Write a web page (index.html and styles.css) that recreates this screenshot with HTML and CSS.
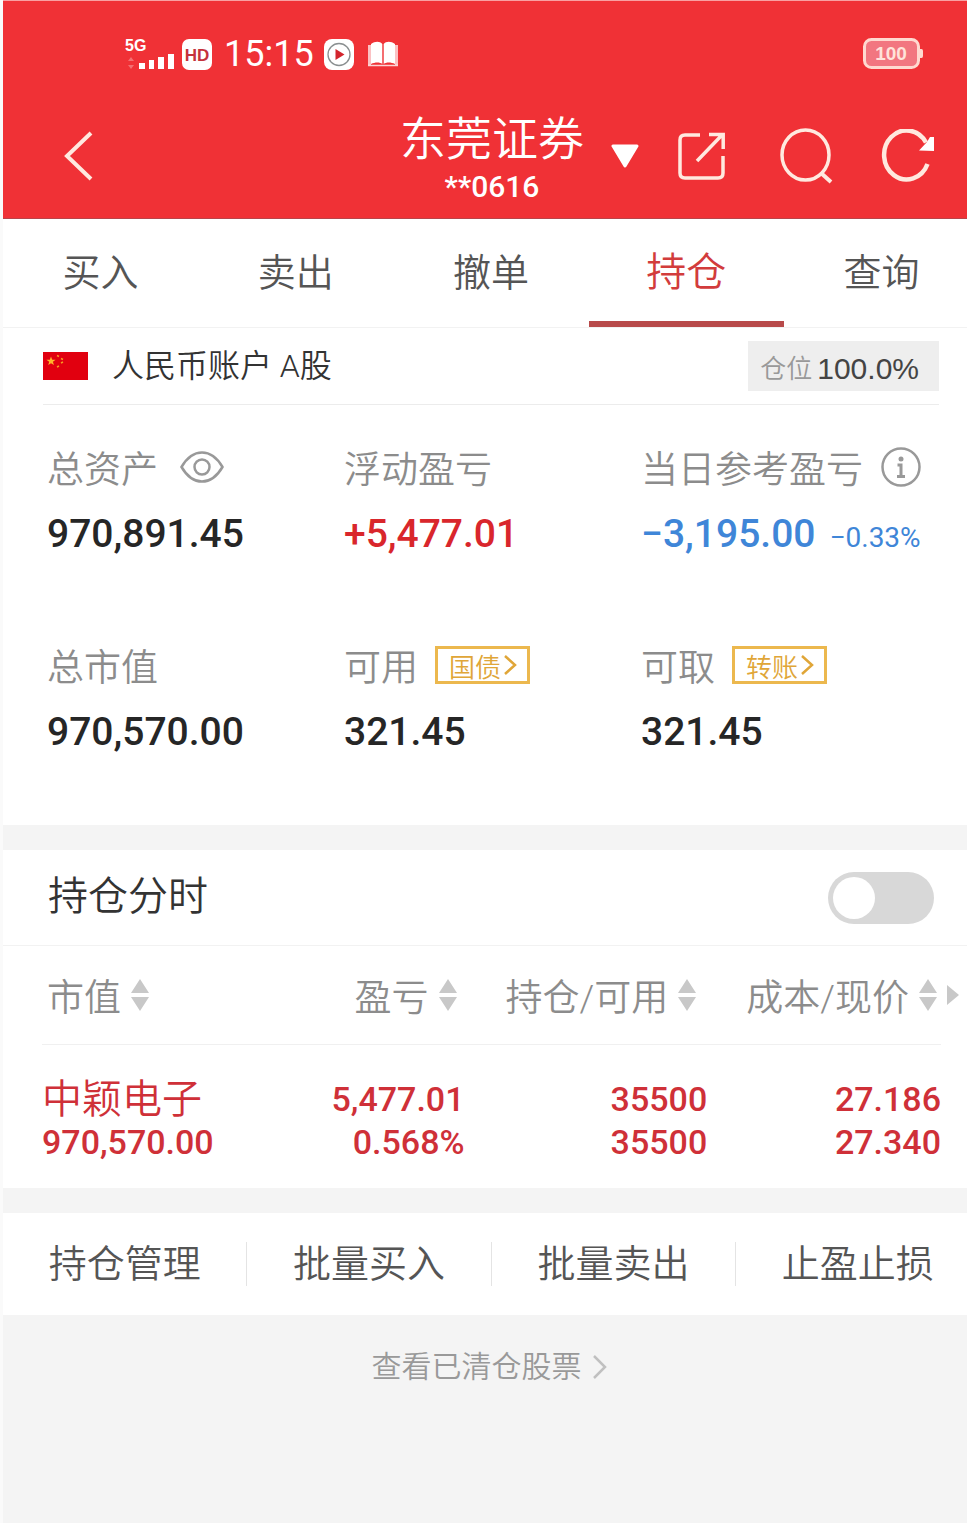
FILE: index.html
```html
<!DOCTYPE html>
<html lang="zh-CN">
<head>
<meta charset="utf-8">
<meta name="viewport" content="width=device-width, initial-scale=1">
<title>东莞证券 持仓</title>
<link rel="stylesheet" href="styles.css">
</head>
<body>
<div class="app">
  <header class="top">
    <div class="status">
      <svg class="status-signal" width="50" height="32" viewBox="0 0 50 32" role="img" aria-label="5G">
        <text x="0" y="13" class="signal-text">5G</text>
        <path d="M3 23l3-4 3 4zM3 27l3 4 3-4z" fill="#fff" opacity=".3"/>
        <path d="M14 25h6v6h-6zM24 22h5v9h-5zM33 19h6v12h-6zM43 16h6v15h-6z" fill="#fff"/>
      </svg>
      <svg class="status-hd" width="30" height="31" viewBox="0 0 30 31" role="img" aria-label="HD">
        <rect width="30" height="31" rx="7" fill="#fff"/>
        <text x="15" y="22" text-anchor="middle" class="hd-text">HD</text>
      </svg>
      <span class="status-time">15:15</span>
      <svg class="status-play" width="30" height="31" viewBox="0 0 30 31" aria-hidden="true">
        <rect width="30" height="31" rx="8" fill="#fff"/>
        <circle cx="15" cy="15.500" r="11" fill="none" stroke="#8a8f90" stroke-width="1.300"/>
        <path d="M11.500 10l9 5.500-9 5.500z" fill="#d3252d"/>
      </svg>
      <svg width="32" height="26" viewBox="0 0 32 26" aria-hidden="true">
        <path d="M1 4h3v20H1zM28 4h3v20h-3z" fill="#fff" opacity=".7"/>
        <path d="M4 3C8 0 13 0 15.300 3v20C13 21 8 21 4 23zM28 3c-4-3-9-3-11.300 0v20c2.300-2 7.300-2 11.300 0z" fill="#fff"/>
        <path d="M1 24.500h30" stroke="#fff" stroke-width="1.500" opacity=".8"/>
      </svg>
      <svg class="status-battery" width="60" height="32" viewBox="0 0 60 32" role="img" aria-label="100">
        <rect x="1.500" y="1.500" width="54" height="28" rx="7" fill="#f27680" stroke="#ffd9d0" stroke-width="3"/>
        <path d="M57 11h1.500q1.500 0 1.500 2v5q0 2-1.500 2H57z" fill="#ffd9d0"/>
        <text x="28" y="22" text-anchor="middle" class="battery-text">100</text>
      </svg>
    </div>
    <div class="nav">
      <button class="icon-btn" type="button" aria-label="返回">
        <svg width="30" height="50" viewBox="0 0 30 50"><path d="M28 2L4 25l24 23" fill="none" stroke="#ffe9df" stroke-width="4"/></svg>
      </button>
      <button class="broker" type="button">
        <span class="broker-name"><span class="broker-title">东莞证券</span><span class="broker-id">**0616</span></span>
        <svg width="28" height="24" viewBox="0 0 28 24" aria-hidden="true"><path d="M2 2h24L14 22z" fill="#fff" stroke="#fff" stroke-width="3" stroke-linejoin="round"/></svg>
      </button>
      <div class="nav-tools">
        <button class="icon-btn" type="button" aria-label="分享">
          <svg width="48" height="48" viewBox="0 0 48 48" fill="none" stroke="#ffe9df" stroke-width="3.500"><path d="M22 3H7Q2 3 2 8v33q0 5 5 5h33q5 0 5-5V24M19 29L44 3M31 2.500h14.200V17"/></svg>
        </button>
        <button class="icon-btn" type="button" aria-label="搜索">
          <svg width="61" height="56" viewBox="-7 0 61 56" fill="none" stroke="#ffe9df" stroke-width="3.500"><ellipse cx="25.500" cy="27" rx="23.500" ry="25"/><path d="M41 45l10 9" stroke-width="4"/></svg>
        </button>
        <button class="icon-btn" type="button" aria-label="刷新">
          <svg width="54" height="54" viewBox="0 0 54 54" fill="none" stroke="#ffe9df" stroke-width="4.500"><path d="M46.500 35A22.500 24.500 0 1 1 45 13.500"/><path d="M38 21.500L46 13l3-5h4v14z" fill="#fff" stroke="none"/></svg>
        </button>
      </div>
    </div>
  </header>

  <nav class="tabs">
    <a class="tab" href="#buy">买入</a>
    <a class="tab" href="#sell">卖出</a>
    <a class="tab" href="#cancel">撤单</a>
    <a class="tab tab-active" href="#positions" aria-current="page">持仓</a>
    <a class="tab" href="#query">查询</a>
  </nav>

  <main>
    <section class="panel">
      <div class="account">
        <svg width="45" height="28" viewBox="0 0 45 28" aria-hidden="true">
          <rect width="45" height="28" fill="#e1000f"/>
          <path d="M8 4.500l1.200 3.200h3.400L9.900 9.800l1 3.300L8 11.200l-2.800 1.900 1-3.300-2.800-2.100h3.400z" fill="#ffb52b"/>
          <path d="M14 3.500l2 1M18 6.500l2 1M18 11l2-1M14 15l2-1" stroke="#f79a20" stroke-width="1.500"/>
        </svg>
        <span class="account-name">人民币账户 A股</span>
        <span class="ratio"><span class="ratio-label">仓位</span><span>100.0%</span></span>
      </div>
      <dl class="metrics">
        <div class="metric">
          <dt>总资产
            <button class="icon-btn metric-eye" type="button" aria-label="隐藏金额">
              <svg width="44" height="32" viewBox="0 0 44 32" fill="none" stroke="#999" stroke-width="2.500"><path d="M1.500 16Q10 1.500 22 1.500T42.500 16Q34 30.500 22 30.500T1.500 16z"/><circle cx="22" cy="16" r="7.500"/></svg>
            </button>
          </dt>
          <dd>970,891.45</dd>
        </div>
        <div class="metric">
          <dt>浮动盈亏</dt>
          <dd class="up">+5,477.01</dd>
        </div>
        <div class="metric">
          <dt>当日参考盈亏
            <button class="icon-btn metric-info" type="button" aria-label="说明">
              <svg width="40" height="40" viewBox="0 0 40 40" fill="none" stroke="#999" stroke-width="2.500"><circle cx="20" cy="20" r="18.500"/><circle cx="20" cy="12" r="2.500" fill="#999" stroke="none"/><path d="M16.500 18H20v11M16 29.500h8" stroke-width="3"/></svg>
            </button>
          </dt>
          <dd class="down">−3,195.00<small>−0.33%</small></dd>
        </div>
        <div class="metric">
          <dt>总市值</dt>
          <dd>970,570.00</dd>
        </div>
        <div class="metric">
          <dt>可用
            <a class="chip" href="#bond">国债<svg width="14" height="24" viewBox="0 0 14 24" fill="none" stroke="#e0a638" stroke-width="2.500" aria-hidden="true"><path d="M2 3l10 9-10 9"/></svg></a>
          </dt>
          <dd>321.45</dd>
        </div>
        <div class="metric">
          <dt>可取
            <a class="chip" href="#transfer">转账<svg width="14" height="24" viewBox="0 0 14 24" fill="none" stroke="#e0a638" stroke-width="2.500" aria-hidden="true"><path d="M2 3l10 9-10 9"/></svg></a>
          </dt>
          <dd>321.45</dd>
        </div>
      </dl>
    </section>

    <section class="panel">
      <div class="toggle-row">
        <label for="intraday">持仓分时</label>
        <input class="switch" id="intraday" type="checkbox" role="switch">
      </div>
      <div class="table-wrap">
        <table class="holdings">
          <thead>
            <tr>
              <th scope="col"><button class="sort" type="button">市值<svg width="18" height="32" viewBox="0 0 18 32" aria-hidden="true"><path d="M9 0l9 14H0zM0 18h18L9 32z" fill="#c8c8c8"/></svg></button></th>
              <th scope="col"><button class="sort" type="button">盈亏<svg width="18" height="32" viewBox="0 0 18 32" aria-hidden="true"><path d="M9 0l9 14H0zM0 18h18L9 32z" fill="#c8c8c8"/></svg></button></th>
              <th scope="col"><button class="sort" type="button">持仓/可用<svg width="18" height="32" viewBox="0 0 18 32" aria-hidden="true"><path d="M9 0l9 14H0zM0 18h18L9 32z" fill="#c8c8c8"/></svg></button></th>
              <th scope="col"><button class="sort" type="button">成本/现价<svg width="18" height="32" viewBox="0 0 18 32" aria-hidden="true"><path d="M9 0l9 14H0zM0 18h18L9 32z" fill="#c8c8c8"/></svg></button><svg class="more" width="12" height="20" viewBox="0 0 12 20" aria-hidden="true"><path d="M0 0l12 10L0 20z" fill="#c8c8c8"/></svg></th>
            </tr>
          </thead>
          <tbody>
            <tr>
              <td><span class="stock">中颖电子</span><span>970,570.00</span></td>
              <td><span>5,477.01</span><span>0.568%</span></td>
              <td><span>35500</span><span>35500</span></td>
              <td><span>27.186</span><span>27.340</span></td>
            </tr>
          </tbody>
        </table>
      </div>
    </section>

    <section class="panel actions">
      <button class="action" type="button"><span>持仓管理</span></button>
      <button class="action" type="button"><span>批量买入</span></button>
      <button class="action" type="button"><span>批量卖出</span></button>
      <button class="action" type="button"><span>止盈止损</span></button>
    </section>
  </main>

  <footer class="foot">
    <a class="cleared" href="#cleared">查看已清仓股票<svg width="15" height="24" viewBox="0 0 15 24" fill="none" stroke="#c0c0c0" stroke-width="2.500" aria-hidden="true"><path d="M2 1l11 11L2 23"/></svg></a>
  </footer>
</div>
</body>
</html>
```
FILE: styles.css
```css
* {
  box-sizing: border-box;
}

body {
  margin: 0;
  background: #fafafa;
  font-family: Roboto, "Noto Sans CJK SC DemiLight", "Noto Sans CJK SC", sans-serif;
  font-weight: 350;
  color: #333;
}

button {
  margin: 0;
  padding: 0;
  border: 0;
  background: none;
  color: inherit;
  font: inherit;
  cursor: pointer;
}

a {
  color: inherit;
  text-decoration: none;
}

svg {
  display: block;
  flex: none;
}

.app {
  display: flex;
  flex-direction: column;
  min-height: 100vh;
  margin-left: 3px;
  overflow: hidden;
  background: #f4f4f4;
}

/* Header */

.top {
  padding-bottom: 13px;
  border-top: 1px solid #f9a0a2;
  border-bottom: 1px solid #b9444a;
  background: #f03136;
  color: #fff;
}

.status {
  display: flex;
  align-items: center;
  height: 106px;
  padding: 0 44px 0 122px;
}

.signal-text {
  font: 700 16px "Liberation Sans", sans-serif;
  fill: #fff;
}

.status-hd {
  margin-left: 7px;
}

.hd-text {
  font: 700 17px "Liberation Sans", sans-serif;
  fill: #c5323b;
}

.status-time {
  margin-left: 12px;
  font-size: 36px;
  font-weight: 400;
}

.status-play {
  margin: 0 13px 0 10px;
}

.status-battery {
  margin-left: auto;
}

.battery-text {
  font: 700 19px "Liberation Sans", sans-serif;
  fill: #ffe3da;
}

.nav {
  display: flex;
  align-items: center;
  justify-content: space-between;
  height: 98px;
  padding: 0 32px 0 60px;
}

.icon-btn {
  flex: none;
}

.broker {
  display: flex;
  flex: 1;
  align-items: center;
  justify-content: flex-end;
  gap: 27px;
  margin-right: 39px;
}

.broker-name {
  display: flex;
  flex-direction: column;
  align-items: center;
  padding-top: 6px;
}

.broker-title {
  font-size: 46px;
  line-height: 56px;
}

.broker-id {
  font-size: 30px;
  font-weight: 500;
  line-height: 40px;
}

.nav-tools {
  display: flex;
  align-items: center;
  gap: 47px;
}

/* Tabs */

.tabs {
  display: grid;
  grid-template-columns: repeat(5, 20.25%);
  height: 109px;
  border-bottom: 1px solid #f2f2f2;
  background: #fff;
}

.tab {
  padding-top: 26px;
  font-size: 38px;
  line-height: 56px;
  text-align: center;
  color: #555;
}

.tab-active {
  border-bottom: 6px solid #b84a4a;
  font-size: 40px;
  color: #d23c3c;
}

.panel {
  background: #fff;
}

.panel + .panel {
  margin-top: 25px;
}

/* Account */

.account {
  display: flex;
  align-items: center;
  margin: 0 28px 0 40px;
  padding: 13px 0;
  border-bottom: 1px solid #ececec;
}

.account-name {
  margin-left: 24px;
  font-size: 32px;
  line-height: 48px;
}

.ratio {
  display: flex;
  align-items: center;
  gap: 5px;
  margin-left: auto;
  padding: 6px 20px 0 12px;
  background: #eee;
  font-family: "Liberation Sans", "Noto Sans CJK SC DemiLight", "Noto Sans CJK SC", sans-serif;
  font-size: 30px;
  line-height: 44px;
  color: #444;
}

.ratio-label {
  font-size: 26px;
  color: #999;
}

/* Metrics */

.metrics {
  display: grid;
  grid-template-columns: repeat(3, 1fr);
  row-gap: 82px;
  margin: 0;
  padding: 38px 29px 68px 44px;
}

.metric dt {
  display: flex;
  align-items: center;
  height: 48px;
  font-size: 37px;
  white-space: nowrap;
  color: #8c8c8c;
}

.metric dd {
  height: 50px;
  margin: 18px 0 0;
  font-size: 39px;
  font-weight: 500;
  line-height: 50px;
  white-space: nowrap;
  color: #262626;
}

.metric dd small {
  margin-left: 14px;
  font-size: 28px;
  font-weight: 400;
}

.metric .up {
  color: #d9262c;
}

.metric .down {
  color: #3f86d8;
}

.metric-eye {
  margin-left: 22px;
}

.metric-info {
  margin-left: 18px;
}

.chip {
  display: flex;
  align-items: center;
  gap: 2px;
  height: 38px;
  margin-left: 17px;
  padding: 0 10px 0 11px;
  border: 3px solid #ecb84e;
  font-size: 26px;
  color: #e0a638;
}

/* Intraday switch */

.toggle-row {
  display: flex;
  align-items: center;
  justify-content: space-between;
  height: 96px;
  padding: 0 33px 0 45px;
  border-bottom: 1px solid #f2f2f2;
  font-size: 40px;
}

.toggle-row label {
  padding-bottom: 10px;
}

.switch {
  appearance: none;
  display: flex;
  width: 106px;
  height: 52px;
  margin: 0;
  padding: 5px;
  border-radius: 26px;
  background: #d8d8d8;
  cursor: pointer;
}

.switch::before {
  content: "";
  width: 42px;
  height: 42px;
  border-radius: 50%;
  background: #fff;
}

.switch:checked {
  justify-content: flex-end;
  background: #f03136;
}

/* Holdings */

.table-wrap {
  padding: 0 26px 0 39px;
}

.holdings {
  width: 100%;
  border-collapse: collapse;
  table-layout: fixed;
}

.holdings th {
  position: relative;
  height: 98px;
  padding: 0;
  border-bottom: 1px solid #f0f0f0;
  font-size: 37px;
  font-weight: 350;
  text-align: right;
  white-space: nowrap;
  color: #8c8c8c;
}

.holdings th:nth-child(1) {
  width: 20%;
  padding-left: 5px;
  text-align: left;
}

.holdings th:nth-child(2) {
  width: 27%;
  padding-right: 8px;
}

.holdings th:nth-child(3) {
  width: 27%;
  padding-right: 11px;
}

.holdings th:nth-child(4) {
  width: 26%;
  padding-right: 4px;
}

.sort {
  display: inline-flex;
  align-items: center;
  gap: 10px;
}

.more {
  position: absolute;
  top: 39px;
  right: -18px;
}

.holdings td {
  padding: 33px 0 24px;
  font-size: 34px;
  font-weight: 500;
  line-height: 43px;
  text-align: right;
  color: #cf3038;
}

.holdings td:first-child {
  text-align: left;
}

.holdings td span {
  display: block;
}

.holdings .stock {
  font-size: 40px;
  font-weight: 350;
}

/* Actions */

.actions {
  display: grid;
  grid-template-columns: repeat(4, 25.35%);
  align-items: center;
  height: 102px;
}

.action {
  border-right: 1px solid #e4e4e4;
  font-size: 38px;
  line-height: 44px;
  white-space: nowrap;
  color: #555;
}

.foot {
  display: flex;
  justify-content: center;
  padding: 30px 0;
  padding-left: 8px;
}

.cleared {
  display: flex;
  align-items: center;
  gap: 10px;
  font-size: 30px;
  line-height: 44px;
  color: #999;
}
```
